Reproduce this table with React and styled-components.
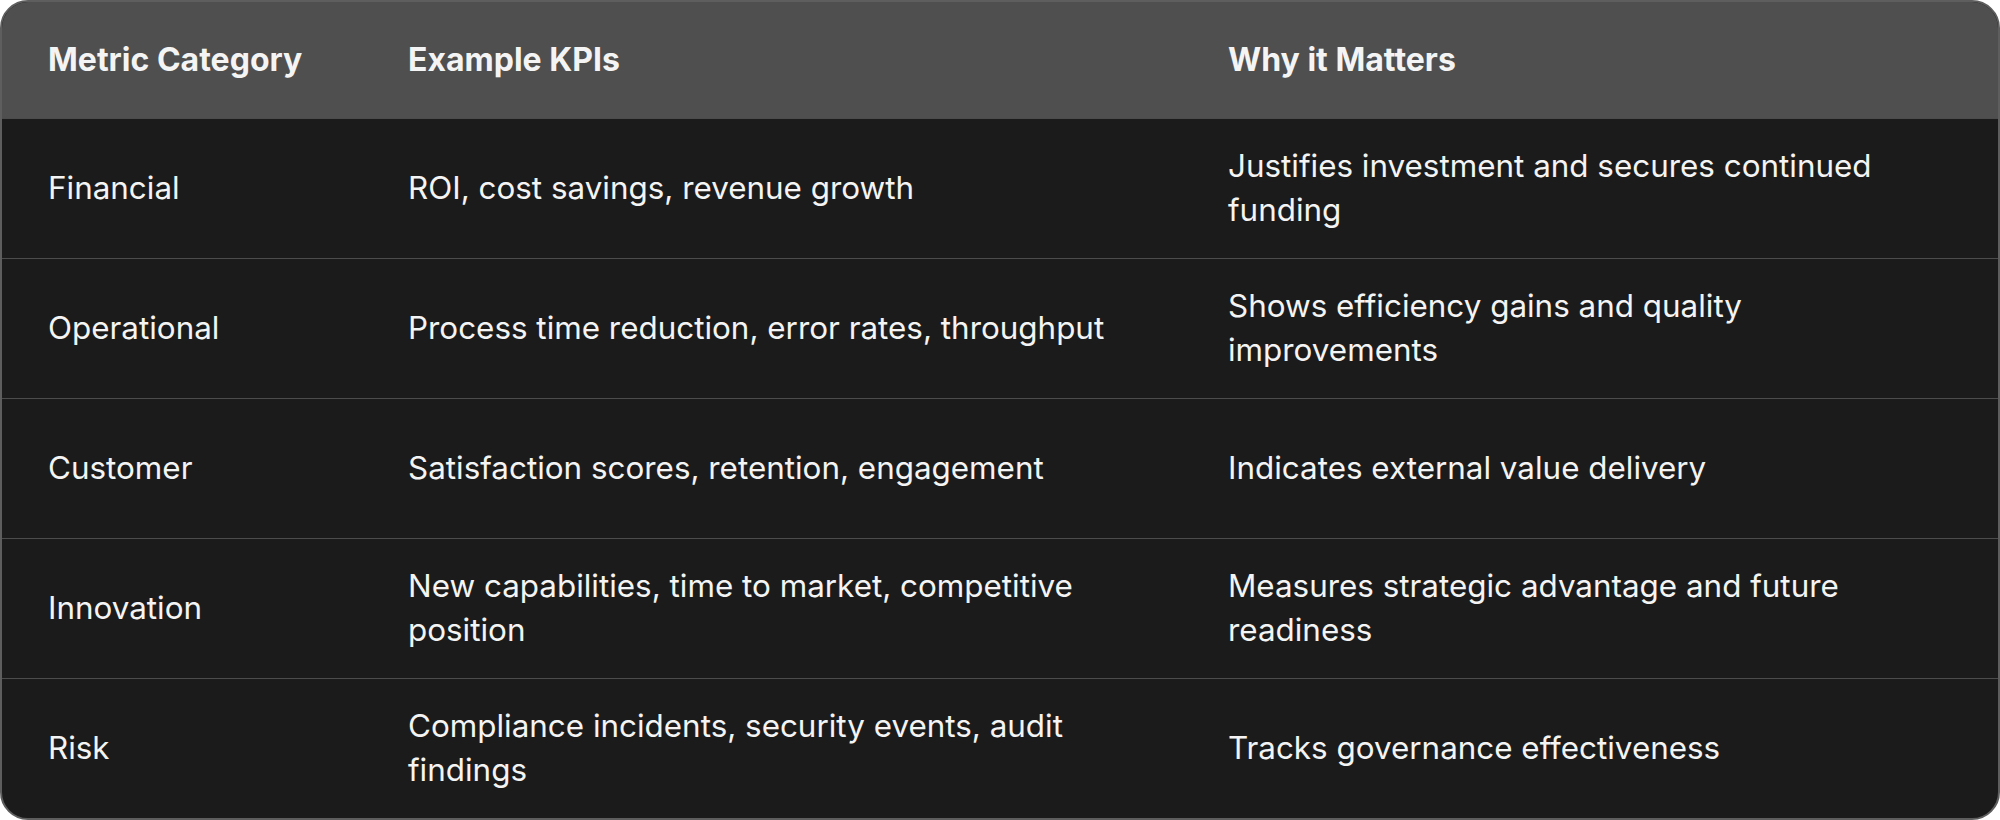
import React from "react";
import styled, { createGlobalStyle } from "styled-components";

const Global = createGlobalStyle`
  html, body { margin: 0; padding: 0; background: #ffffff; }
  * { box-sizing: border-box; }
`;

const Frame = styled.div`
  width: 2000px;
  height: 820px;
  border: 2px solid #5e5e5e;
  border-radius: 28px;
  overflow: hidden;
  background: #1b1b1b;
  font-family: Inter, "Noto Sans", sans-serif;
  color: #f4f4f4;
`;

const Table = styled.table`
  width: 100%;
  border-collapse: collapse;
  table-layout: fixed;
`;

const Col = styled.col`
  width: ${(p) => p.$w}px;
`;

const HeadRow = styled.tr`
  background: #4f4f4f;
  height: 116px;
`;

const HeadCell = styled.th`
  text-align: left;
  font-weight: 700;
  font-size: 32px;
  padding: 0 48px 0 ${(p) => (p.$first ? 46 : 48)}px;
  vertical-align: middle;
`;

const Row = styled.tr`
  height: 140px;
  border-top: 1px solid #4c4c4c;
`;

const Cell = styled.td`
  font-size: 31.4px;
  font-weight: 400;
  line-height: 44px;
  padding: 0 48px 0 ${(p) => (p.$first ? 46 : 48)}px;
  vertical-align: middle;
`;

const rows = [
  ["Financial", "ROI, cost savings, revenue growth", "Justifies investment and secures continued funding"],
  ["Operational", "Process time reduction, error rates, throughput", "Shows efficiency gains and quality improvements"],
  ["Customer", "Satisfaction scores, retention, engagement", "Indicates external value delivery"],
  ["Innovation", "New capabilities, time to market, competitive position", "Measures strategic advantage and future readiness"],
  ["Risk", "Compliance incidents, security events, audit findings", "Tracks governance effectiveness"],
];

export default function App() {
  return (
    <>
      <Global />
      <Frame>
        <Table>
          <colgroup>
            <Col $w={358} />
            <Col $w={820} />
            <Col $w={818} />
          </colgroup>
          <thead>
            <HeadRow>
              <HeadCell $first>Metric Category</HeadCell>
              <HeadCell>Example KPIs</HeadCell>
              <HeadCell>Why it Matters</HeadCell>
            </HeadRow>
          </thead>
          <tbody>
            {rows.map((r) => (
              <Row key={r[0]}>
                <Cell $first>{r[0]}</Cell>
                <Cell>{r[1]}</Cell>
                <Cell>{r[2]}</Cell>
              </Row>
            ))}
          </tbody>
        </Table>
      </Frame>
    </>
  );
}
